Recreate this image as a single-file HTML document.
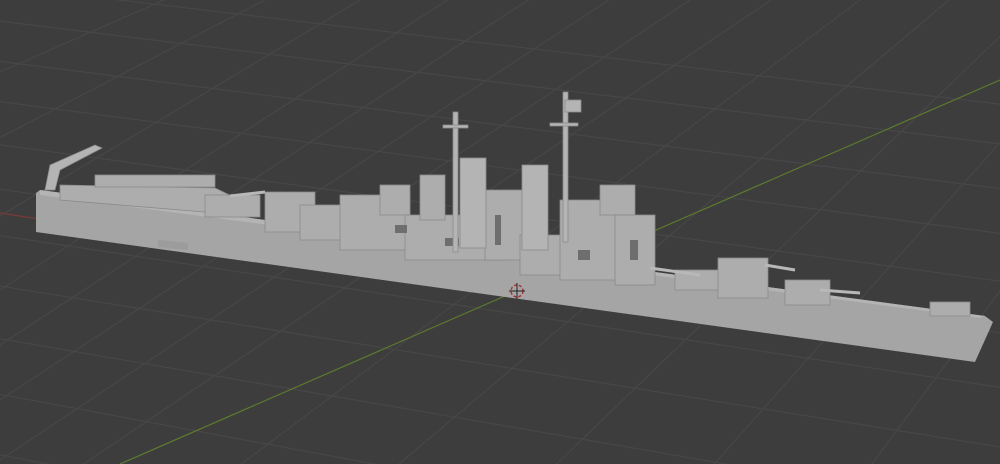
<!DOCTYPE html><html><head><style>html,body{margin:0;padding:0;width:1000px;height:464px;background:#3d3d3d;overflow:hidden}svg{display:block}</style></head><body>
<svg width="1000" height="464" viewBox="0 0 1000 464" xmlns="http://www.w3.org/2000/svg">
<rect width="1000" height="464" fill="#3d3d3d"/>
<g stroke="#474747" stroke-width="1.2" fill="none">
<path d="M-50 -20 L1050 110"/><path d="M-50 15 L1050 150"/><path d="M-50 55 L1050 195"/><path d="M-50 95 L1050 240"/><path d="M-50 138 L1050 288"/><path d="M-50 182 L1050 340"/><path d="M-50 228 L1050 395"/><path d="M-50 278 L1050 455"/><path d="M-50 330 L1050 520"/><path d="M-50 385 L1050 590"/><path d="M-50 445 L1050 660"/>
<path d="M-200 160 L300 -60"/><path d="M-120 200 L380 -60"/><path d="M-40 240 L460 -60"/><path d="M0 290 L540 -60"/><path d="M0 345 L620 -60"/><path d="M0 400 L700 -60"/><path d="M0 460 L780 -60"/><path d="M60 480 L860 -60"/><path d="M220 480 L940 -60"/><path d="M380 480 L1020 -60"/><path d="M540 480 L1100 -60"/><path d="M700 480 L1180 -60"/><path d="M860 480 L1260 -60"/>
</g>
<path d="M0 213 L45 220" stroke="#7a3a3a" stroke-width="1.2"/>
<path d="M120 464 L1000 80" stroke="#5d7a2e" stroke-width="1.2"/>
<polygon points="36,193 40,190 985,316 993,322 975,362 36,232" fill="#a5a5a5"/>
<polygon points="40,190 985,316 980,318 40,195" fill="#b4b4b4"/>
<polygon points="158,240 188,243 188,250 158,247" fill="#9c9c9c"/>
<g fill="#adadad" stroke="#8a8a8a" stroke-width="0.8">
<polygon points="60,185 215,188 240,200 240,215 60,200"/>
<rect x="95" y="175" width="120" height="12"/>
<rect x="205" y="195" width="55" height="22"/>
<rect x="265" y="192" width="50" height="40"/>
<rect x="300" y="205" width="60" height="35"/>
<rect x="340" y="195" width="70" height="55"/>
<rect x="380" y="185" width="30" height="30"/>
<rect x="405" y="215" width="100" height="45"/>
<rect x="420" y="175" width="25" height="45"/>
<rect x="485" y="190" width="40" height="70"/>
<rect x="520" y="235" width="60" height="40"/>
<rect x="560" y="200" width="70" height="80"/>
<rect x="600" y="185" width="35" height="30"/>
<rect x="615" y="215" width="40" height="70"/>
<rect x="675" y="270" width="50" height="20"/>
<rect x="718" y="258" width="50" height="40"/>
<rect x="785" y="280" width="45" height="25"/>
<rect x="930" y="302" width="40" height="14"/>
</g>
<g fill="#6e6e6e">
<rect x="395" y="225" width="12" height="8"/><rect x="445" y="238" width="14" height="8"/><rect x="578" y="250" width="12" height="10"/><rect x="630" y="240" width="8" height="20"/><rect x="495" y="215" width="6" height="30"/>
</g>
<g fill="#b4b4b4" stroke="#8a8a8a" stroke-width="0.8">
<rect x="460" y="158" width="26" height="90"/>
<rect x="522" y="165" width="26" height="85"/>
<rect x="453" y="112" width="5" height="140"/>
<rect x="563" y="92" width="5" height="150"/>
<rect x="443" y="125" width="25" height="3"/>
<rect x="550" y="123" width="28" height="3"/>
<rect x="565" y="100" width="16" height="12"/>
<path d="M45 190 L50 165 L95 145 L102 148 L60 170 L55 190Z"/>
</g>
<g stroke="#b8b8b8" stroke-width="3">
<path d="M650 268 L700 275"/><path d="M765 265 L795 270"/><path d="M820 290 L860 293"/><path d="M230 196 L265 192"/>
</g>
<circle cx="517" cy="291" r="6" fill="none" stroke="#a33" stroke-width="1.5" stroke-dasharray="3 2"/>
<path d="M509 291h16M517 283v16" stroke="#222" stroke-width="1"/>
</svg>
</body></html>
